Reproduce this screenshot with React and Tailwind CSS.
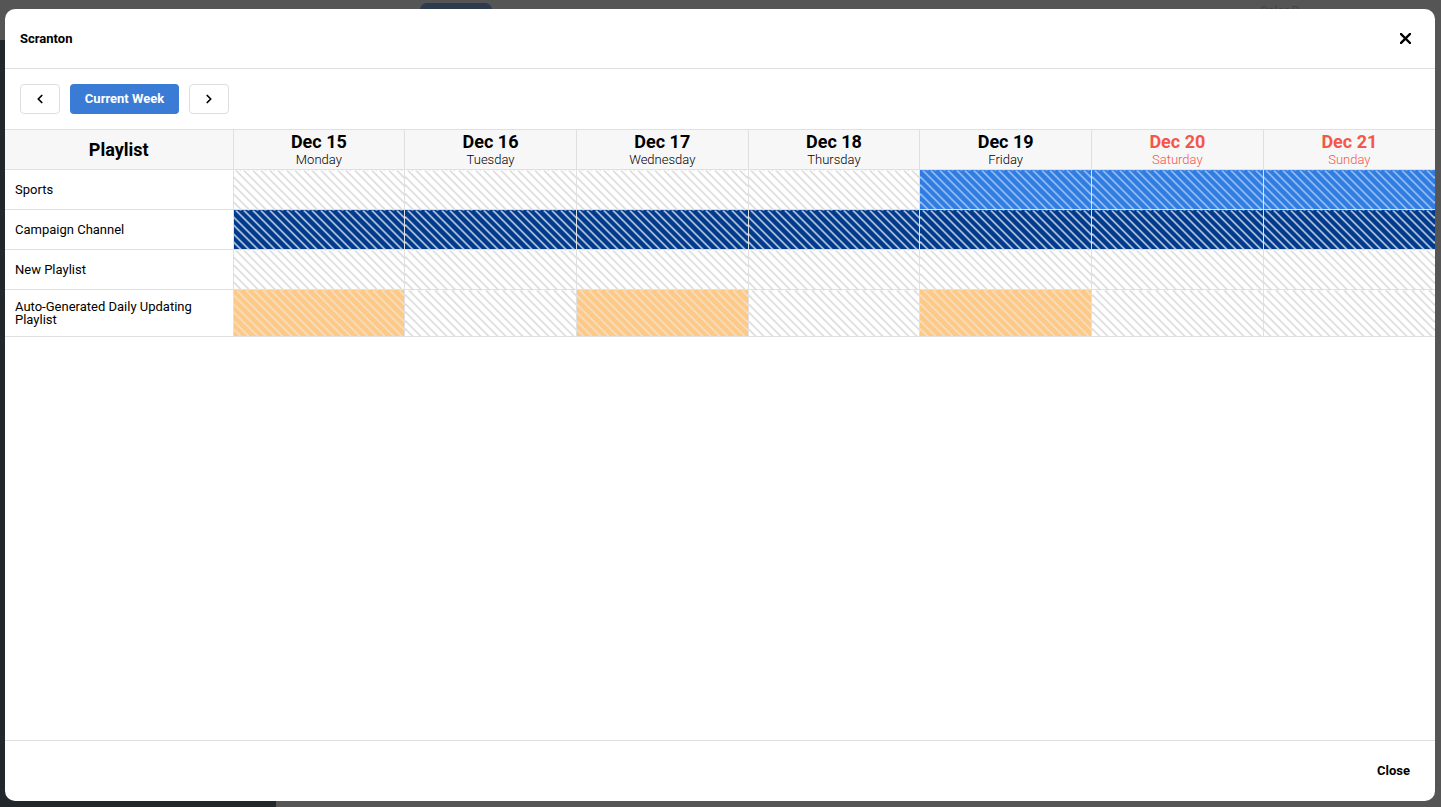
import React from "react";
import { ChevronLeft, ChevronRight } from "lucide-react";

const days = [
  { date: "Dec 15", name: "Monday", weekend: false },
  { date: "Dec 16", name: "Tuesday", weekend: false },
  { date: "Dec 17", name: "Wednesday", weekend: false },
  { date: "Dec 18", name: "Thursday", weekend: false },
  { date: "Dec 19", name: "Friday", weekend: false },
  { date: "Dec 20", name: "Saturday", weekend: true },
  { date: "Dec 21", name: "Sunday", weekend: true },
];

// e = empty, l = light blue, d = dark blue, o = orange
const rows = [
  { name: "Sports", cells: ["e", "e", "e", "e", "l", "l", "l"] },
  { name: "Campaign Channel", cells: ["d", "d", "d", "d", "d", "d", "d"] },
  { name: "New Playlist", cells: ["e", "e", "e", "e", "e", "e", "e"] },
  { name: "Auto-Generated Daily Updating Playlist", cells: ["o", "e", "o", "e", "o", "e", "e"] },
];

const fills = {
  e: "bg-[repeating-linear-gradient(45deg,#ffffff_0px,#ffffff_4.5px,#d6d6d6_4.5px,#d6d6d6_6px)]",
  l: "bg-[repeating-linear-gradient(45deg,#2f7de3_0px,#2f7de3_4.5px,#a9c9f2_4.5px,#a9c9f2_6px)]",
  d: "bg-[repeating-linear-gradient(45deg,#003a8c_0px,#003a8c_4.5px,#d9e0ea_4.5px,#d9e0ea_6px)]",
  o: "bg-[repeating-linear-gradient(45deg,#fec985_0px,#fec985_4.5px,#f1e4d2_4.5px,#f1e4d2_6px)]",
};

export default function App() {
  return (
    <div className="relative w-[1441px] h-[807px] overflow-hidden bg-[#555555] font-['Roboto',sans-serif]">
      {/* page behind the overlay */}
      <div className="absolute left-0 top-[40px] bottom-0 w-[276px] bg-[#22272b]" />
      <div className="absolute left-[420px] top-[3px] w-[72px] h-[14px] rounded-full bg-[#2e3a4d]" />
      <div className="absolute left-[1260px] top-[2px] text-[12px] text-[#444]">Color P</div>

      {/* modal */}
      <div className="absolute left-[5px] top-[9px] w-[1430px] h-[792px] bg-white rounded-[10px] flex flex-col overflow-hidden">
        <header className="h-[60px] flex items-center justify-between px-[15px] border-b border-[#e0e0e0] shrink-0">
          <h1 className="text-[13px] font-bold text-black">Scranton</h1>
          <button className="w-[20px] h-[20px] flex items-center justify-center mr-[5px]">
            <svg width="11" height="11" viewBox="0 0 11 11">
              <path d="M1 1 L10 10 M10 1 L1 10" stroke="#000" strokeWidth="2.4" strokeLinecap="square" />
            </svg>
          </button>
        </header>

        <div className="flex items-center gap-[10px] px-[15px] py-[15px] shrink-0">
          <button className="w-[40px] h-[30px] flex items-center justify-center rounded-[4px] border border-[#dedede] bg-white">
            <ChevronLeft size={14} strokeWidth={3} color="#000" />
          </button>
          <button className="h-[30px] w-[109px] rounded-[4px] bg-[#3a7bd5] text-white text-[13px] font-bold">
            Current Week
          </button>
          <button className="w-[40px] h-[30px] flex items-center justify-center rounded-[4px] border border-[#dedede] bg-white">
            <ChevronRight size={14} strokeWidth={3} color="#000" />
          </button>
        </div>

        <div className="flex-1">
          <table className="w-full table-fixed border-collapse">
            <colgroup>
              <col className="w-[228px]" />
              {days.map((d) => (
                <col key={d.date} />
              ))}
            </colgroup>
            <thead>
              <tr className="h-[40px] bg-[#f7f7f7]">
                <th className="border-y border-r border-[#e0e0e0] text-[18px] font-bold text-black">Playlist</th>
                {days.map((d) => (
                  <th
                    key={d.date}
                    className={`border border-[#e0e0e0] border-r-0 font-normal pt-[1px] pb-[2px] ${d.weekend ? "text-[#f5564a]" : "text-black"}`}
                  >
                    <div className="text-[18px] font-bold leading-[21px]">{d.date}</div>
                    <div className="text-[13px] font-light leading-[15px]">{d.name}</div>
                  </th>
                ))}
              </tr>
            </thead>
            <tbody>
              {rows.map((r) => (
                <tr key={r.name} className="h-[40px]">
                  <td className="border-y border-r border-[#e0e0e0] pl-[10px] pr-[30px] py-[10px] text-[13px] leading-[13px] text-black">
                    {r.name}
                  </td>
                  {r.cells.map((c, i) => (
                    <td key={i} className={`border border-r-0 border-[#e0e0e0] ${fills[c]}`} />
                  ))}
                </tr>
              ))}
            </tbody>
          </table>
        </div>

        <footer className="h-[61px] border-t border-[#e0e0e0] flex items-center justify-end px-[25px] shrink-0">
          <button className="text-[13px] font-bold text-black">Close</button>
        </footer>
      </div>
    </div>
  );
}
